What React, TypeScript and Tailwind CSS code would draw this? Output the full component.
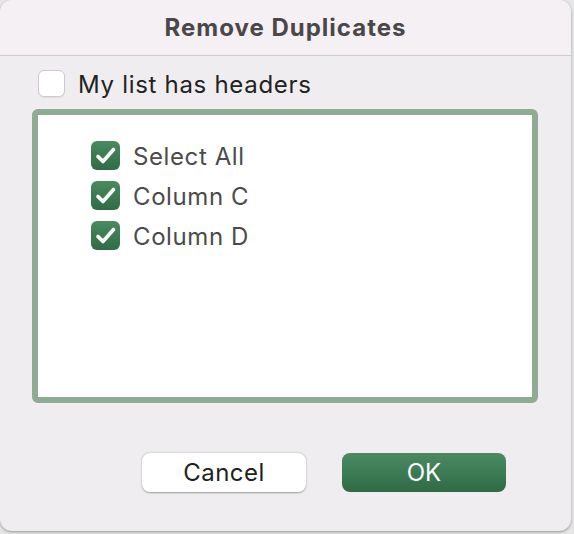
import { useState } from 'react'

function GreenCheck() {
  return (
    <span className="flex h-[29px] w-[29px] items-center justify-center rounded-[6px] bg-gradient-to-b from-[#4a8b60] to-[#2f6c45]">
      <svg width="29" height="29" viewBox="0 0 29 29" fill="none">
        <path
          d="M7 15.5 L12 20.5 L22.5 8.5"
          stroke="white"
          strokeWidth="3.6"
          strokeLinecap="round"
          strokeLinejoin="round"
        />
      </svg>
    </span>
  )
}

export default function App() {
  const [columns] = useState(['Select All', 'Column C', 'Column D'])

  return (
    <div className="h-[534px] w-[574px] overflow-hidden bg-[#e6e6e6] font-['Inter','Liberation_Sans',sans-serif]">
      <div className="flex h-[531px] w-[571px] flex-col overflow-hidden rounded-[12px] bg-[#efedf0] shadow-[0_1px_3px_rgba(0,0,0,0.35)]">
        <div className="flex h-[56px] shrink-0 items-center justify-center border-b border-[#cfcdd0] bg-[#f4f0f4]">
          <h1 className="text-[24px] font-bold tracking-[1px] text-[#4a4749] leading-none">
            Remove Duplicates
          </h1>
        </div>

        <div className="flex flex-col px-[32px]">
          <label className="mt-[13px] flex h-[28px] items-center gap-[13px] pl-[6px]">
            <span className="h-[27px] w-[27px] rounded-[6px] border border-[#cbc9cc] bg-white shadow-[0_1px_1px_rgba(0,0,0,0.06)]" />
            <span className="pt-[4px] text-[24px] tracking-[0.7px] text-[#222222] leading-none">
              My list has headers
            </span>
          </label>

          <div className="mt-[12px] h-[294px] w-[506px] rounded-[6px] border-[6px] border-[#8fac93] bg-white pl-[53px] pt-[20px]">
            {columns.map((c) => (
              <div key={c} className="flex h-[40px] items-center gap-[13px]">
                <GreenCheck />
                <span className="pt-[3px] text-[24px] tracking-[0.6px] text-[#4b4b4b] leading-none">
                  {c}
                </span>
              </div>
            ))}
          </div>

          <div className="mt-[50px] flex gap-[36px] pl-[110px]">
            <button className="h-[39px] w-[164px] rounded-[8px] bg-white text-[24px] tracking-[0.5px] text-[#1f1f1f] shadow-[0_0.5px_2px_rgba(0,0,0,0.35)]">
              Cancel
            </button>
            <button className="h-[39px] w-[164px] rounded-[8px] bg-gradient-to-b from-[#4a8b62] to-[#2e6b45] text-[24px] text-white">
              OK
            </button>
          </div>
        </div>
      </div>
    </div>
  )
}
